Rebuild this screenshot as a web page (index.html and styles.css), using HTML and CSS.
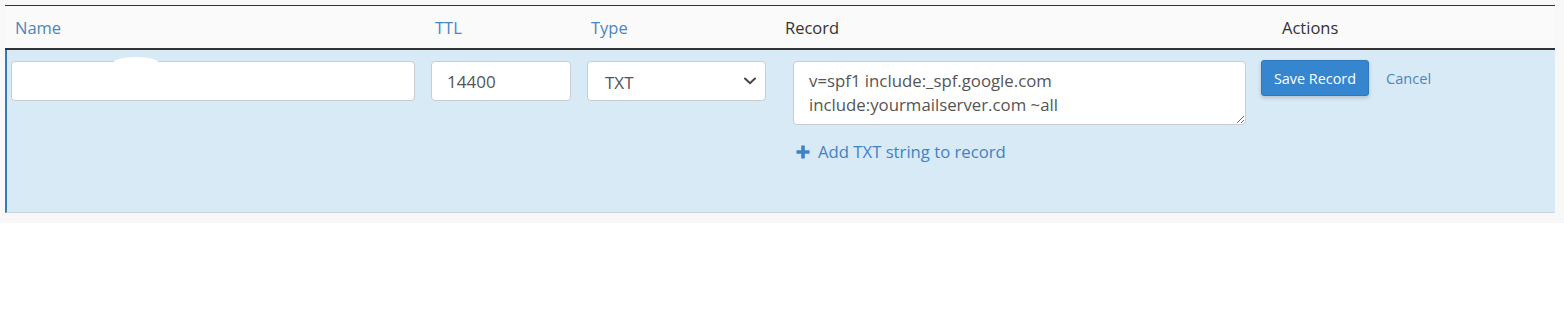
FILE: index.html
```html
<!DOCTYPE html>
<html>
<head>
<meta charset="utf-8">
<link rel="stylesheet" href="styles.css">
</head>
<body>
<div class="panel">
  <div class="table">
    <div class="head">
      <div class="th th-name sortable">Name</div>
      <div class="th th-ttl sortable">TTL</div>
      <div class="th th-type sortable">Type</div>
      <div class="th th-record">Record</div>
      <div class="th th-actions">Actions</div>
    </div>
    <div class="row editing">
      <div class="td td-name">
        <input class="field field-name" type="text" value="">
        <span class="blot"></span>
      </div>
      <div class="td td-ttl">
        <input class="field field-ttl" type="text" value="14400">
      </div>
      <div class="td td-type">
        <div class="field field-select">
          <span>TXT</span>
          <svg class="chev" width="14" height="10" viewBox="0 0 14 10"><path d="M2 2.5 L7 7.2 L12 2.5" fill="none" stroke="#444" stroke-width="2" stroke-linecap="round"/></svg>
        </div>
      </div>
      <div class="td td-record">
        <textarea class="field field-record">v=spf1 include:_spf.google.com include:yourmailserver.com ~all</textarea>
        <a class="add-link" href="#"><svg class="plus" width="14" height="14" viewBox="0 0 14 14"><path d="M5.2 0.5h3.6v4.7h4.7v3.6H8.8v4.7H5.2V8.8H0.5V5.2h4.7z" fill="#3d82c4"/></svg>Add TXT string to record</a>
      </div>
      <div class="td td-actions">
        <button class="btn-save" type="button">Save Record</button>
        <a class="cancel" href="#">Cancel</a>
      </div>
    </div>
  </div>
</div>
</body>
</html>
```
FILE: styles.css
```css
* { box-sizing: border-box; }
html, body { margin: 0; padding: 0; background: #fff; }
body { font-family: "Open Sans", "Noto Sans", sans-serif; color: #333; }

.panel {
  background: #f8f8f8;
  padding: 5px 9px 10px 5px;
  width: 1564px;
}

.table {
  width: 1550px;
  border-top: 1px solid #333;
}

.head {
  display: grid;
  grid-template-columns: 420px 156px 196px 476px 302px;
  height: 44px;
  background: #fafafa;
  border-bottom: 2px solid #333;
}
.th {
  display: flex;
  align-items: center;
  font-size: 16.5px;
  padding-left: 10px;
  padding-top: 1px;
  color: #333;
}
.th.sortable { color: #4a86c0; }
.th-record { padding-left: 8px; }
.th-actions { padding-left: 29px; }

.row {
  display: grid;
  grid-template-columns: 418px 156px 196px 476px 302px;
  background: #d9eaf7;
  border-left: 2px solid #337ab7;
  border-bottom: 1px solid #cdd3d8;
  padding-top: 11px;
  height: 163px;
  align-items: start;
}
.td { position: relative; }
.td-name { padding-left: 4px; }
.td-ttl, .td-type { padding-left: 6px; }
.td-record { padding-left: 16px; display: flex; flex-direction: column; }
.td-actions { padding-left: 8px; display: flex; align-items: center; margin-top: -1px; }

.field {
  display: block;
  height: 40px;
  border: 1px solid #c9ccd0;
  border-radius: 4px;
  background: #fff;
  font-family: "Open Sans", "Noto Sans", sans-serif;
  font-size: 17px;
  color: #555;
  padding: 0 15px;
  outline: none;
}
.field-name { width: 404px; }
.field-ttl { width: 140px; }
.field-select {
  width: 179px;
  display: flex;
  align-items: center;
  justify-content: space-between;
  padding: 2px 8px 0 17px;
}
.chev { margin-top: -2px; }
.field-record {
  width: 453px;
  height: 64px;
  padding: 7px 15px 5px;
  font-size: 16.8px;
  line-height: 24px;
  resize: vertical;
}

.blot {
  position: absolute;
  left: 106px;
  top: -4px;
  width: 46px;
  height: 12px;
  border-radius: 50%;
  background: #fff;
}

.add-link {
  display: flex;
  align-items: center;
  margin-top: 15px;
  margin-left: 3px;
  font-size: 16.7px;
  line-height: 24px;
  color: #3f83c3;
  text-decoration: none;
}
.plus { margin-right: 8px; }

.btn-save {
  width: 108px;
  height: 36px;
  border: 1px solid #2f78bd;
  border-radius: 3px;
  background: #3585cf;
  color: #fff;
  font-family: "Open Sans", "Noto Sans", sans-serif;
  font-size: 14.4px;
  box-shadow: 0 2px 4px rgba(0, 0, 0, 0.18);
  padding: 0;
}
.cancel {
  margin-left: 17px;
  font-size: 14.6px;
  color: #4a86c0;
  text-decoration: none;
}
```
